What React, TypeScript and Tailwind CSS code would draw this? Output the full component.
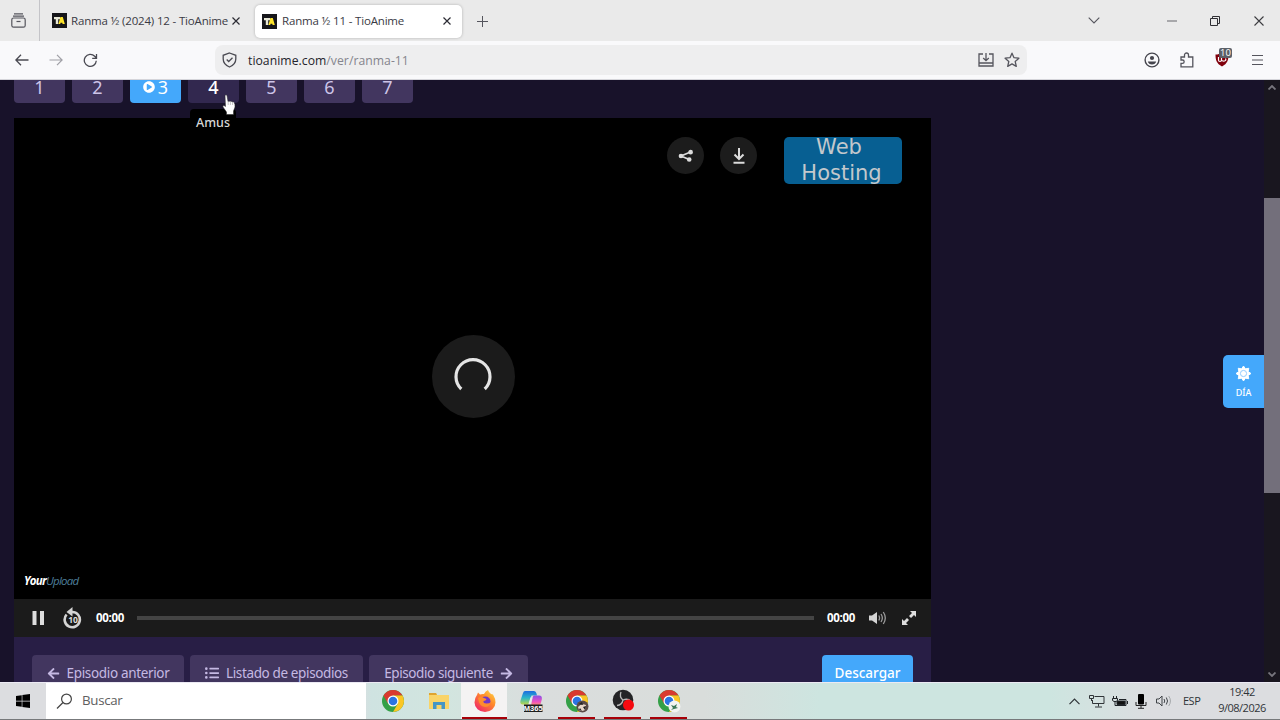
import { ReactNode } from 'react'
import { FaArrowLeft, FaArrowRight, FaListUl, FaPlayCircle, FaWindows } from 'react-icons/fa'

const episodes = ['1', '2', '3', '4', '5', '6', '7']

const Favicon = () => (
    <svg width="15" height="15" viewBox="0 0 15 15" className="shrink-0">
        <rect width="15" height="15" fill="#16161a" />
        <path d="M2 4h6v2.200H6.200V11H3.800V6.200H2z" fill="#e8e8d8" />
        <path d="M8.400 4h2.400l2 7h-2.200l-.3-1.300H8.600L8.200 11H6.400z" fill="#ffe52c" />
    </svg>
)

const CloseX = () => (
    <svg width="8" height="8" viewBox="0 0 8 8" stroke="#2c2c34" strokeWidth="1.200" fill="none" className="shrink-0">
        <path d="M.5.5l7 7M7.500.5l-7 7" />
    </svg>
)

const TabBar = () => (
    <div className="flex h-[41px] items-center bg-[#eaeaea] text-[#3a3a44]">
        <div className="flex h-full w-10 items-center border-r border-[#c4c4c8] pl-[11px]">
            <svg width="15" height="15" viewBox="0 0 15 15" fill="none" stroke="#55555d" strokeWidth="1.200">
                <path d="M3 .8h9M2 3.200h11" />
                <rect x=".8" y="5" width="13.400" height="9.200" rx="1.800" />
                <path d="M5.500 8.500h4" />
            </svg>
        </div>
        <div className="flex w-[215px] items-center pl-3">
            <Favicon />
            <span className="ml-1 w-[161px] whitespace-nowrap pt-px font-['Open_Sans',sans-serif] text-[11.500px] tracking-[-0.17px]">Ranma ½ (2024) 12 - TioAnime</span>
            <CloseX />
        </div>
        <div className="mt-px flex h-[33px] w-[207px] items-center rounded-[5px] bg-white pl-[7px] shadow-[0_0_3px_rgba(0,0,0,0.25)]">
            <Favicon />
            <span className="ml-[5px] w-[161px] whitespace-nowrap font-['Open_Sans',sans-serif] text-[11.500px] tracking-[-0.17px]">Ranma ½ 11 - TioAnime</span>
            <CloseX />
        </div>
        <svg width="11" height="11" viewBox="0 0 11 11" stroke="#55555d" className="ml-[15px] mt-px">
            <path d="M5.500 0v11M0 5.500h11" />
        </svg>
        <div className="ml-auto flex items-center pr-4">
            <svg width="12" height="7" viewBox="0 0 12 7" fill="none" stroke="#55555d" strokeWidth="1.100">
                <path d="M.7.7L6 6 11.300.7" />
            </svg>
            <svg width="10" height="2" viewBox="0 0 10 2" className="ml-[67px]">
                <path d="M0 1h10" stroke="#66666c" />
            </svg>
            <svg width="10" height="10" viewBox="0 0 10 10" fill="none" stroke="#303034" className="ml-[33px]">
                <path d="M.5 2.500h7v7h-7zM2.500 2.500v-2h7v7h-2" />
            </svg>
            <svg width="10" height="10" viewBox="0 0 10 10" stroke="#3c3c40" strokeWidth="1.100" className="ml-[34px]">
                <path d="M.5.5l9 9M9.500.5l-9 9" />
            </svg>
        </div>
    </div>
)

const NavBar = () => (
    <div className="flex h-[39px] items-center border-b border-[#d5d5da] bg-[#f9f9fb] font-['Open_Sans',sans-serif]">
        <svg width="14" height="12" viewBox="0 0 14 12" fill="none" stroke="#4a4a52" strokeWidth="1.300" className="ml-[15px]">
            <path d="M6 .8L.9 6 6 11.200M1 6h12.500" />
        </svg>
        <svg width="14" height="12" viewBox="0 0 14 12" fill="none" stroke="#a0a0a6" strokeWidth="1.200" className="ml-5">
            <path d="M8 .8L13.100 6 8 11.200M.5 6H13" />
        </svg>
        <svg width="15" height="15" viewBox="0 0 15 15" fill="none" stroke="#4a4a52" strokeWidth="1.300" className="ml-5">
            <path d="M13.300 7.800A6 6 0 1 1 11.700 3.300L13.200 4.800M13.500 1v4.300H9.200" />
        </svg>
        <div className="ml-[117px] flex h-[30px] w-[812px] items-center rounded-[8px] bg-[#eeeeef] pl-[7px] pr-[7px]">
            <svg width="15" height="16" viewBox="0 0 15 16" fill="none" stroke="#4a4a52" strokeWidth="1.300">
                <path d="M7.500 1L13.800 3.300V7c0 4-2.800 6.500-6.300 8C4 13.500 1.200 11 1.200 7V3.300z" />
                <path d="M4.700 7.500l2 2L10.500 5.800" />
            </svg>
            <span className="ml-[11px] pt-[3px] text-[12.200px] tracking-[0.04px] text-[#24242c]">
                tioanime.com<span className="text-[#85858d]">/ver/ranma-11</span>
            </span>
            <svg width="16" height="14" viewBox="0 0 16 14" fill="none" stroke="#55555d" strokeWidth="1.300" className="ml-auto">
                <path d="M5 1H1v12h14V1h-4M1 10h14M8 0v7.500M5.200 5L8 7.700 10.800 5" />
            </svg>
            <svg width="16" height="16" viewBox="0 0 16 16" fill="none" stroke="#55555d" strokeWidth="1.300" strokeLinejoin="round" className="ml-[10px]">
                <path d="M8 1.200l2 4.500 4.900.5-3.700 3.300 1.100 4.900L8 11.900l-4.300 2.500 1.100-4.900L1.100 6.200 6 5.700z" />
            </svg>
        </div>
        <div className="ml-auto flex items-center pr-[17px]">
            <svg width="16" height="16" viewBox="0 0 16 16" fill="none" stroke="#45454d" strokeWidth="1.400">
                <circle cx="8" cy="8" r="6.900" />
                <circle cx="8" cy="6" r="2.100" fill="#45454d" stroke="none" />
                <path d="M3.800 9.500h8.400c-.5 2-2 3-4.200 3s-3.700-1-4.200-3z" fill="#45454d" stroke="none" />
            </svg>
            <svg width="14" height="16" viewBox="0 0 14 16" fill="none" stroke="#55555d" strokeWidth="1.300" className="ml-5">
                <path d="M1 5h3.500V3a2 2 0 0 1 4 0v2h4.300v9.800H1v-3.500h1.500a1.600 1.600 0 0 0 0-3.300H1z" />
            </svg>
            <div className="relative ml-[21px] h-4 w-[18px]">
                <svg width="14" height="15" viewBox="0 0 14 15">
                    <path d="M7 .5c2 1.500 4 2 6.500 2 0 5.500-1 9-6.500 12C1.500 11.500.5 8 .5 2.500 3 2.500 5 2 7 .5z" fill="#80000c" />
                    <path d="M3.500 5v3q0 1.500 1.500 1.500T6.500 8V5m0 3q1 1.500 3 1t1-2.500" fill="none" stroke="#fff" strokeWidth="1.200" />
                </svg>
                <span className="absolute -top-[4px] left-[4px] h-[10px] w-[13px] rounded-[2px] bg-[#5b6068] text-center text-[9.500px] leading-[10px] text-white">10</span>
            </div>
            <svg width="11" height="10" viewBox="0 0 11 10" stroke="#55555d" className="ml-[19px]">
                <path d="M0 .5h11M0 5h11M0 9.500h11" />
            </svg>
        </div>
    </div>
)

const RoundButton = ({ children }: { children: ReactNode }) => (
    <div className="flex size-[37px] items-center justify-center rounded-full bg-[#1c1c1c]">{children}</div>
)

const Player = () => (
    <div className="flex h-[519px] flex-col bg-black">
        <div className="flex h-[66px] items-start pl-[653px] pt-[19px]">
            <RoundButton>
                <svg width="16" height="14" viewBox="0 0 16 14" fill="#dcdcdc" stroke="#dcdcdc" strokeWidth="1.700">
                    <path d="M12.500 3L3 7l8.200 3.500" fill="none" />
                    <circle cx="12.600" cy="3.200" r="1.500" />
                    <circle cx="3" cy="7" r="1.500" />
                    <circle cx="11.200" cy="10.500" r="1.500" />
                </svg>
            </RoundButton>
            <div className="ml-4">
                <RoundButton>
                    <svg width="14" height="16" viewBox="0 0 14 16" fill="none" stroke="#dcdcdc" strokeWidth="2">
                        <path d="M7 0v10.500M2.500 6.500L7 11l4.500-4.500M1.500 14.700h11" />
                    </svg>
                </RoundButton>
            </div>
            <div className="ml-[27px] h-[47px] w-[118px] overflow-hidden rounded-[5px] bg-[#075f92] pr-1 text-center font-['DejaVu_Sans',sans-serif] text-[21px] leading-[25.500px] text-[#c3c8cc]">
                <p className="-mt-[2px] pr-[4px]">Web</p>
                <p className="pl-px">Hosting</p>
            </div>
        </div>
        <div className="flex flex-1 items-center justify-center pb-[32px] pl-px">
            <div className="mt-[2px] flex size-[83px] items-center justify-center rounded-full bg-[#1b1b1b]">
                <svg width="40" height="40" viewBox="0 0 40 40" fill="none" stroke="#e4e4e4" strokeWidth="3.200">
                    <path d="M8.300 32A17 17 0 1 1 31.700 32" />
                </svg>
            </div>
        </div>
        <p className="-mt-[31px] h-[31px] pl-[10px] pt-[4px] font-['Open_Sans',sans-serif] text-[11.500px] font-bold italic tracking-[-0.75px] text-white">
            Your<span className="font-medium text-[#4e7f9b]">Upload</span>
        </p>
        <div className="flex h-[38px] items-center bg-[#1b1b1b] pl-[18px] pr-[15px] font-['Open_Sans',sans-serif] text-[11.500px] font-bold text-white">
            <svg width="13" height="14" viewBox="0 0 13 14" fill="#dedede">
                <path d="M.5 0h4v14h-4zM8 0h4v14H8z" />
            </svg>
            <svg width="20" height="22" viewBox="0 0 20 22" fill="none" className="ml-[18px]">
                <path d="M3.600 7.500A7.600 7.600 0 1 0 9 5" stroke="#d4d4d4" strokeWidth="2.600" />
                <path d="M9.500 0v9.500L3.500 5z" fill="#d4d4d4" />
                <text x="10" y="16" textAnchor="middle" fontSize="8.500" fontFamily="Open Sans" fontWeight="700" fill="#dedede">10</text>
            </svg>
            <span className="ml-[13px] w-[29px] tracking-[-0.3px]">00:00</span>
            <div className="ml-[12px] h-1 flex-1 bg-[#444]" />
            <span className="ml-[13px] w-[29px] tracking-[-0.3px]">00:00</span>
            <svg width="18" height="14" viewBox="0 0 18 14" fill="none" stroke="#9b9b9b" strokeWidth="1.300" className="ml-[13px]">
                <path d="M0 4.500h3L8 1v12L3 9.500H0z" fill="#d4d4d4" stroke="none" />
                <path d="M9.800 4.500q1.500 2.500 0 5M12 3q2.700 4 0 8M14.300 1q4 6 0 12" />
            </svg>
            <svg width="14" height="14" viewBox="0 0 14 14" fill="#dedede" className="ml-[15px]">
                <path d="M8 0h6v6l-2-2-3 3-2-2 3-3zM6 14H0V8l2 2 3-3 2 2-3 3z" />
            </svg>
        </div>
    </div>
)

const Page = () => (
    <div className="flex h-[602px] overflow-hidden bg-[#18122a] font-['Noto_Sans',sans-serif]">
        <div className="ml-[14px] w-[917px]">
            <div className="-mt-[8px] flex h-[46px] gap-[7px] text-[18px] leading-[30px] text-[#cdc4e8]">
                {episodes.map((ep) => (
                    <div
                        key={ep}
                        className={`relative flex h-[31px] w-[51px] items-center justify-center rounded-b-[4px] pb-[2px] ${ep === '3' ? 'gap-[3px] bg-[#44a8fb] text-white' : ep === '4' ? 'bg-[#32284f] font-medium text-white' : 'bg-[#42365f]'}`}
                    >
                        {ep === '3' && <FaPlayCircle size={12} />}
                        {ep}
                        {ep === '4' && (
                            <>
                                <span className="absolute left-[2px] top-[37px] z-10 h-[27px] w-[46px] rounded bg-black text-center text-[12.500px] font-medium leading-[28px] text-[#d8d8d8]">Amus</span>
                                <svg width="14" height="21" viewBox="0 0 14 21" className="absolute left-[34px] top-[22px] z-20">
                                    <path d="M3 1.500Q4 0 5 1.500l1 6q1-1 2 0 1-1 2 .5 1.500-.7 2.300.8.900 1.500.7 4.200L11.500 17v3.500h-7V18L1 13q-.7-1.800 1-1.500l1.500 1z" fill="#fff" stroke="#222" strokeWidth=".5" />
                                    <path d="M6.200 7.500V11M8.400 8v3M10.600 8.500V11" stroke="#888" strokeWidth=".5" />
                                </svg>
                            </>
                        )}
                    </div>
                ))}
            </div>
            <Player />
            <div className="flex h-[60px] items-start gap-[6px] bg-[#281e45] px-[18px] pt-[18px] text-[13.500px] leading-[36px] text-[#c5b9e3]">
                <div className="flex h-[36px] w-[152px] items-center justify-center gap-[7px] rounded-t bg-[#42365f]">
                    <FaArrowLeft size={13} />
                    <span className="tracking-[-0.34px]">Episodio anterior</span>
                </div>
                <div className="flex h-[36px] w-[173px] items-center justify-center gap-[7px] rounded-t bg-[#42365f]">
                    <FaListUl size={14} />
                    <span className="tracking-[-0.37px]">Listado de episodios</span>
                </div>
                <div className="flex h-[36px] w-[159px] items-center justify-center gap-[7px] rounded-t bg-[#42365f]">
                    <span className="tracking-[-0.4px]">Episodio siguiente</span>
                    <FaArrowRight size={13} />
                </div>
                <div className="ml-auto h-[36px] w-[91px] rounded-t bg-[#44a8fb] text-center font-medium text-white">Descargar</div>
            </div>
        </div>
        <div className="ml-auto mt-[275px] flex h-[53px] w-[41px] flex-col items-center rounded-l-[5px] bg-[#44a8fb] pt-[11px] text-white">
            <svg width="15" height="15" viewBox="-8 -8 16 16">
                <path
                    d="M0-8L2-5 5.600-5.600 5-2 8 0 5 2 5.600 5.600 2 5 0 8-2 5-5.600 5.600-5 2-8 0-5-2-5.600-5.600-2-5z"
                    fill="#fff"
                    stroke="#fff"
                    strokeLinejoin="round"
                />
                <circle r="3.300" fill="none" stroke="#8dc9ff" />
            </svg>
            <span className="mt-[6px] text-[9px] font-medium leading-3">DÍA</span>
        </div>
        <div className="flex w-4 flex-col items-center bg-[#19161f]">
            <svg width="8" height="5" viewBox="0 0 8 5" fill="none" stroke="#77757d" strokeWidth="1.800" className="mt-[5px]">
                <path d="M.5 4.500L4 1l3.500 3.500" />
            </svg>
            <div className="mt-[108px] h-[295px] w-full bg-[#736f7b]" />
            <svg width="8" height="5" viewBox="0 0 8 5" fill="none" stroke="#77757d" strokeWidth="1.800" className="mb-[5px] mt-auto">
                <path d="M.5.500L4 4 7.500.5" />
            </svg>
        </div>
    </div>
)

const ChromeIcon = ({ children }: { children?: ReactNode }) => (
    <svg width="24" height="24" viewBox="0 0 24 24">
        <circle cx="12" cy="12" r="11" fill="#34a047" />
        <path d="M2.500 6.500A11 11 0 0 1 21.500 6.500H12L7.200 14.700z" fill="#d93a30" />
        <path d="M21.500 6.500A11 11 0 0 1 12 23L16.800 14.700 12 6.500z" fill="#fbc624" />
        <circle cx="12" cy="12" r="5.500" fill="#fff" />
        <circle cx="12" cy="12" r="4.300" fill="#2b74e2" />
        {children}
    </svg>
)

const FolderIcon = () => (
    <svg width="20" height="18" viewBox="0 0 20 18">
        <path d="M0 1h7l1 2h12v14H0z" fill="#f9d468" />
        <path d="M0 1h7l1 2H0z" fill="#dfa42f" />
        <path d="M4 17v-7h12v7h-3.500v-4h-5v4z" fill="#4596c5" />
    </svg>
)

const FirefoxIcon = () => (
    <svg width="22" height="22" viewBox="0 0 22 22">
        <defs>
            <linearGradient id="fox" x1="1" y1="0" x2=".2" y2="1">
                <stop offset="0" stopColor="#ffe04a" />
                <stop offset=".45" stopColor="#ff8a2a" />
                <stop offset="1" stopColor="#f0246a" />
            </linearGradient>
        </defs>
        <path d="M3 5l1-2.500 2 2q2-.8 4-.5Q11.500 1 14 0q.5 2 3 4l2 .5q2.500 4 2.500 8A10.500 9.500 0 0 1 .5 12.500Q.5 8 3 5z" fill="url(#fox)" />
        <circle cx="11.500" cy="11.500" r="5" fill="#7137c8" />
        <path d="M4 8q3-2 6 0l2.500 1q-.5 1.800-3 2-.5 2.500 3 2.500 3 0 4.500-1.500-1 5-6 5Q5 16.500 4 8z" fill="#ff8c2d" />
    </svg>
)

const CopilotIcon = () => (
    <svg width="24" height="24" viewBox="0 0 24 24">
        <defs>
            <linearGradient id="cl" x1="0" y1="0" x2="0" y2="1">
                <stop offset="0" stopColor="#1d6ce0" />
                <stop offset=".5" stopColor="#29b6c9" />
                <stop offset="1" stopColor="#b9d74a" />
            </linearGradient>
            <linearGradient id="cr" x1="0" y1="0" x2="0" y2="1">
                <stop offset="0" stopColor="#8a50e8" />
                <stop offset=".6" stopColor="#ef52c0" />
                <stop offset="1" stopColor="#ff9a64" />
            </linearGradient>
        </defs>
        <path d="M6 2h9q2 0 2.500 2.500L18 6.500H12.500L9.500 15.500H4q-3.500 0-2.500-4L4 4Q4.600 2 6 2z" fill="url(#cl)" />
        <path d="M15 6.500h5q3.500 0 2.800 4L21 17h-9L13.500 9Q14 6.500 15 6.500z" fill="url(#cr)" />
        <path d="M12.500 8.500L10.500 15" stroke="#e8ecee" strokeWidth="2" />
        <rect x="5" y="15.500" width="18.500" height="7.500" fill="#1c1c1c" />
        <text x="14.200" y="22" textAnchor="middle" fontSize="7.500" fontFamily="Liberation Sans" fontWeight="700" fill="#fff">M365</text>
    </svg>
)

const ObsIcon = () => (
    <svg width="24" height="24" viewBox="0 0 24 24">
        <circle cx="12" cy="11" r="10.300" fill="#242426" />
        <path d="M12 11Q8 8 10 3M12 11q5-2 8 1.500M12 11q-1 5-6 5.500" fill="none" stroke="#b8b8b8" strokeWidth="1.300" />
        <circle cx="17.500" cy="16" r="5.500" fill="#f50a10" />
    </svg>
)

const TaskButton = ({ children, active, open }: { children: ReactNode; active?: boolean; open?: boolean }) => (
    <div className={`flex h-full w-[46px] flex-col items-center ${active ? 'bg-[#f4f3f3]' : ''}`}>
        <div className="flex flex-1 items-center pl-px pt-px">{children}</div>
        <div className={`h-[2px] ${active ? 'w-[45px] bg-[#a80008]' : open ? 'w-[37px] bg-[#a80008]' : 'w-0'}`} />
    </div>
)

const Taskbar = () => (
    <div className="flex h-[38px] items-stretch border-b border-[#77797b] border-t border-t-[#eceaf4] bg-[linear-gradient(90deg,#dcdde0_0%,#dcdde0_28%,#cfe3e1_29%,#d2e5df_35%,#dadddd_42%,#d9dddb_55%,#cde5e0_64%,#cde5e0_82%,#dcdde0_90%)] font-['Open_Sans',sans-serif]">
        <div className="flex w-[46px] items-center justify-center">
            <FaWindows size={16} color="#000" />
        </div>
        <div className="flex w-[320px] items-center bg-white pl-[10px] text-[#606060]">
            <svg width="17" height="17" viewBox="0 0 17 17" fill="none" stroke="#444" strokeWidth="1.200">
                <circle cx="10.500" cy="6" r="4.900" />
                <path d="M7 9.500L1 15.500" />
            </svg>
            <span className="ml-[9px] text-[13.300px] tracking-[-0.3px]">Buscar</span>
        </div>
        <div className="ml-[3px] flex">
            <TaskButton><ChromeIcon /></TaskButton>
            <TaskButton><FolderIcon /></TaskButton>
            <TaskButton active><FirefoxIcon /></TaskButton>
            <TaskButton><CopilotIcon /></TaskButton>
            <TaskButton open>
                <ChromeIcon>
                    <circle cx="17.500" cy="17.500" r="6" fill="#5a4a46" />
                    <path d="M13 18q3-4 8-2l-1 5q-4 2-6 0z" fill="#e6d6c8" />
                    <path d="M14 15l3-2 1 3zM18 18l3-1-1 4zM15 19l2 3-3-1z" fill="#222" />
                </ChromeIcon>
            </TaskButton>
            <TaskButton open><ObsIcon /></TaskButton>
            <TaskButton open>
                <ChromeIcon>
                    <circle cx="17.500" cy="17.500" r="6" fill="#f2f4f2" />
                    <path d="M14 16l3 1 3-2-1 3 2 1-4 1-3 1 2-2z" fill="#3c7a58" />
                </ChromeIcon>
            </TaskButton>
        </div>
        <div className="ml-auto flex items-center pr-[13px] text-[#303438]">
            <svg width="11" height="7" viewBox="0 0 11 7" fill="none" stroke="#303438" strokeWidth="1.200">
                <path d="M.5 6.200l5-5 5 5" />
            </svg>
            <svg width="16" height="13" viewBox="0 0 16 13" fill="none" stroke="#303438" className="ml-[9px]">
                <path d="M5.500 1.500h9.500v7H3.500V5M9.500 8.500v3M6 12h7M.5.500v3h4v-3zM2.500 3.500v2.500" />
            </svg>
            <svg width="16" height="11" viewBox="0 0 16 11" fill="none" stroke="#202428" className="ml-[7px]">
                <path d="M1.500 0v2M4.500 0v2M.5 2.500h5v2l-1.500 1H2l-1.500-1zM3 5.500V9.500h11V3.500H7" />
                <path d="M5 5h8v3.500H5z" fill="#111" />
                <path d="M15.500 5v3" />
            </svg>
            <svg width="12" height="15" viewBox="0 0 12 15" fill="none" stroke="#222" className="ml-[7px]">
                <rect x="3" y="0" width="6" height="10.500" rx="1" fill="#000" stroke="none" />
                <path d="M1 8v3.500h10V8M6 11.500V14M3 14.300h6" />
            </svg>
            <svg width="16" height="12" viewBox="0 0 16 12" fill="none" stroke="#404448" className="ml-[9px]">
                <path d="M.5 4h2.500L6 1v10L3 8H.5z" />
                <path d="M8 4q1.500 2 0 4M10.300 2.500q2.500 3.500 0 7" />
                <path d="M12.700 1q3.500 5 0 10" stroke="#a4a8aa" />
            </svg>
            <span className="ml-[11px] w-[18px] text-[11px] tracking-[-0.5px]">ESP</span>
            <div className="ml-[16px] w-[50px] whitespace-nowrap pb-[3px] text-center text-[11px] leading-[16px] tracking-[-0.5px]">
                <p>19:42</p>
                <p>9/08/2026</p>
            </div>
        </div>
    </div>
)

export default function App() {
    return (
        <div className="h-[720px] w-[1280px] overflow-hidden">
            <TabBar />
            <NavBar />
            <Page />
            <Taskbar />
        </div>
    )
}
